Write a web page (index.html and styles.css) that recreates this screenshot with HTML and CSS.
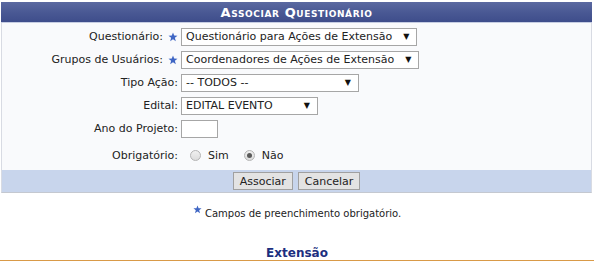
FILE: index.html
```html
<!DOCTYPE html>
<html lang="pt-BR">
<head>
    <meta charset="UTF-8">
    <title>Associar Questionário</title>
    <link rel="stylesheet" href="styles.css">
</head>
<body>
    <div class="form-box">
        <div class="caption">Associar Questionário</div>
        <div class="fields">
            <div class="label">Questionário: <svg class="star" viewBox="0 0 10 10"><path d="M5 0.5 6.2 3.6 9.5 3.7 6.9 5.8 7.8 9.2 5 7.3 2.2 9.2 3.1 5.8 0.5 3.7 3.8 3.6Z"/></svg></div>
            <div class="field"><span class="select">Questionário para Ações de Extensão <i>▼</i></span></div>

            <div class="label">Grupos de Usuários: <svg class="star" viewBox="0 0 10 10"><path d="M5 0.5 6.2 3.6 9.5 3.7 6.9 5.8 7.8 9.2 5 7.3 2.2 9.2 3.1 5.8 0.5 3.7 3.8 3.6Z"/></svg></div>
            <div class="field"><span class="select">Coordenadores de Ações de Extensão <i>▼</i></span></div>

            <div class="label">Tipo Ação:</div>
            <div class="field"><span class="select w-tipo">-- TODOS -- <i>▼</i></span></div>

            <div class="label">Edital:</div>
            <div class="field"><span class="select w-edital">EDITAL EVENTO <i>▼</i></span></div>

            <div class="label">Ano do Projeto:</div>
            <div class="field"><span class="text-input"></span></div>

            <div class="label tall">Obrigatório:</div>
            <div class="field tall">
                <span class="radio"></span><span class="opt">Sim</span>
                <span class="radio checked"></span><span class="opt">Não</span>
            </div>
        </div>
        <div class="buttons">
            <button class="btn">Associar</button>
            <button class="btn">Cancelar</button>
        </div>
    </div>

    <p class="note"><svg class="star small" viewBox="0 0 10 10"><path d="M5 0.5 6.2 3.6 9.5 3.7 6.9 5.8 7.8 9.2 5 7.3 2.2 9.2 3.1 5.8 0.5 3.7 3.8 3.6Z"/></svg> Campos de preenchimento obrigatório.</p>

    <div class="footer-title">Extensão</div>
</body>
</html>
```

FILE: styles.css
```css
body {
    margin: 0;
    padding: 0;
    background: #fff;
    font-family: "DejaVu Sans", Verdana, sans-serif;
    font-size: 11px;
    color: #222;
}
.form-box {
    margin: 2px 2px 0 1px;
    background: #f9fafc;
    border-left: 1px solid #d8dbe3;
    border-right: 1px solid #d8dbe3;
    border-bottom: 1px solid #c4c8d0;
}
.caption {
    height: 20px;
    line-height: 21px;
    background: linear-gradient(#5b69a1, #4a5994 50%, #3e4d8b);
    border-bottom: 1px solid #c6cde2;
    color: #fff;
    text-align: center;
    font-weight: bold;
    font-size: 13px;
    font-variant: small-caps;
    letter-spacing: 0.6px;
    margin: 0 -1px;
}
.fields {
    display: grid;
    grid-template-columns: 179px 1fr;
    padding-top: 2px;
}
.label {
    height: 23px;
    display: flex;
    align-items: center;
    justify-content: flex-end;
    padding-right: 3px;
    color: #222;
}
.field {
    height: 23px;
    display: flex;
    align-items: center;
}
.tall {
    height: 30px;
}
.star {
    width: 10px;
    height: 10px;
    margin-left: 5px;
    fill: #3f66c4;
}
.star.small {
    width: 9px;
    height: 9px;
    margin: 0;
    vertical-align: 3px;
}
.select {
    display: inline-flex;
    align-items: center;
    justify-content: space-between;
    height: 16px;
    padding: 0 7px 0 4px;
    background: #fff;
    border: 1px solid #a6a6a6;
    color: #222;
    gap: 11px;
    white-space: nowrap;
}
.select i {
    font-style: normal;
    font-size: 8px;
    color: #111;
}
.w-tipo {
    width: 165px;
}
.w-edital {
    width: 124px;
}
.text-input {
    display: inline-block;
    width: 35px;
    height: 16px;
    background: #fff;
    border: 1px solid #a6a6a6;
}
.radio {
    display: inline-block;
    width: 11px;
    height: 11px;
    border-radius: 50%;
    border: 1px solid #b4b4b4;
    background: linear-gradient(#f0f0f0, #dcdcdc);
    margin: 0 7px 0 9px;
    box-sizing: border-box;
    position: relative;
}
.radio.checked::after {
    content: "";
    position: absolute;
    left: 2px;
    top: 2px;
    width: 5px;
    height: 5px;
    border-radius: 50%;
    background: #5a5a5a;
}
.opt {
    margin-right: 6px;
}
.buttons {
    height: 22px;
    background: #c8d5ec;
    display: flex;
    justify-content: center;
    align-items: center;
    gap: 5px;
}
.btn {
    font-family: "DejaVu Sans", Verdana, sans-serif;
    font-size: 11px;
    color: #222;
    height: 18px;
    padding: 0 6px;
    background: #e3e3e3;
    border: 1px solid #a0a0a0;
    border-radius: 0;
}
.note {
    margin: 12px 0 0;
    text-align: center;
    font-size: 10px;
    color: #222;
}
.footer-title {
    margin-top: 28px;
    line-height: 13px;
    text-align: center;
    font-weight: bold;
    font-size: 12px;
    color: #1c2f80;
    border-bottom: 3px solid #d99a48;
}
```
